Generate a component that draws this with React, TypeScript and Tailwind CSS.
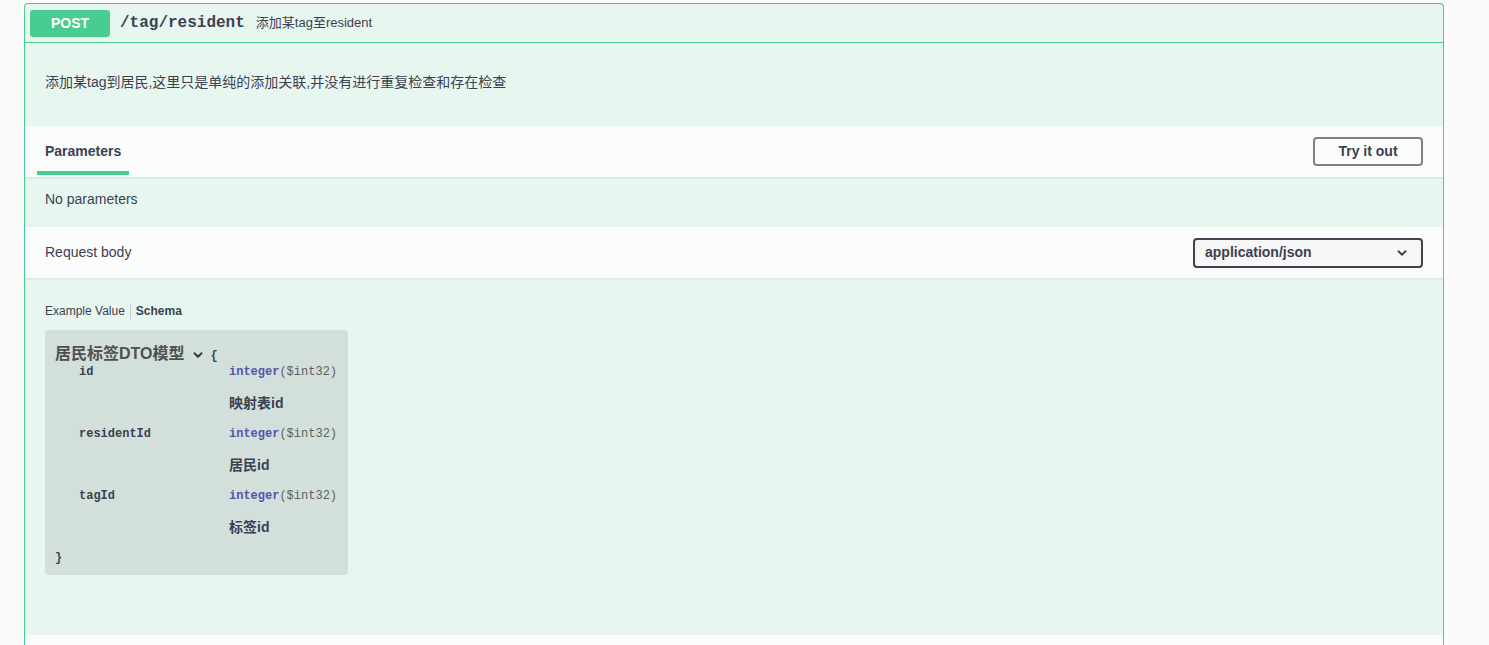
const sans = '[font-family:"Liberation_Sans","Noto_Sans_CJK_SC",sans-serif]'
const mono = '[font-family:"Liberation_Mono","Noto_Sans_CJK_SC",monospace]'

type Prop = { name: string; desc: string }

const props: Prop[] = [
  { name: 'id', desc: '映射表id' },
  { name: 'residentId', desc: '居民id' },
  { name: 'tagId', desc: '标签id' },
]

function Chevron({ className }: { className?: string }) {
  return (
    <svg viewBox="0 0 20 20" className={className} fill="none" stroke="currentColor" strokeWidth={2.6} strokeLinecap="round" strokeLinejoin="round">
      <path d="M5 7.5l5 5 5-5" />
    </svg>
  )
}

export default function App() {
  return (
    <div className={`min-h-[645px] bg-[#fafafa] pl-[24px] pt-[3px] text-[#3b4151] ${sans}`}>
      <div className="h-[642px] w-[1420px] overflow-hidden rounded-t-[4px] border border-b-0 border-[#49cc90] bg-[#e8f6f0]">
        {/* summary */}
        <div className="flex h-[39px] items-center border-b border-[#49cc90] px-[5px]">
          <div className="flex h-[27px] w-[80px] items-center justify-center rounded-[3px] bg-[#49cc90] text-[14px] font-bold text-white">
            POST
          </div>
          <div className={`ml-[10px] text-[16px] font-bold ${mono}`}>/tag/resident</div>
          <div className="ml-[11px] text-[13px]">添加某tag至resident</div>
        </div>

        {/* description */}
        <div className="flex h-[83px] items-center px-[20px] pb-[5px] text-[14px]">
          添加某tag到居民,这里只是单纯的添加关联,并没有进行重复检查和存在检查
        </div>

        {/* parameters tab header */}
        <div className="flex h-[51px] items-center justify-between bg-[#fafdfc] pl-[12px] pr-[20px] shadow-[0_1px_2px_rgba(0,0,0,0.1)]">
          <div className="flex h-full flex-col justify-end">
            <div className="px-[8px] pb-[9px] text-[14px] font-bold">Parameters</div>
            <div className="mb-[2px] h-[4px] w-[92px] bg-[#49cc90]" />
          </div>
          <button className="h-[29px] w-[110px] rounded-[4px] border-2 border-[#808080] text-[14px] font-bold">
            Try it out
          </button>
        </div>

        {/* no parameters */}
        <div className="flex h-[50px] items-center px-[20px] pb-[6px] text-[14px]">No parameters</div>

        {/* request body header */}
        <div className="flex h-[51px] items-center justify-between bg-[#fafdfc] px-[20px] shadow-[0_1px_2px_rgba(0,0,0,0.1)]">
          <div className="text-[14px]">Request body</div>
          <div className="flex h-[30px] w-[230px] items-center justify-between rounded-[4px] border-2 border-[#41444e] bg-[#f7f7f7] pl-[10px] pr-[12px] text-[14px] font-bold">
            <span>application/json</span>
            <Chevron className="h-[14px] w-[14px]" />
          </div>
        </div>

        {/* body */}
        <div className="h-[357px] px-[20px] pt-[24px]">
          <div className="flex items-center text-[12px]">
            <span>Example Value</span>
            <span className="mx-[5px] h-[15px] w-px bg-[#c8ccd0]" />
            <span className="font-bold">Schema</span>
          </div>
          <div className="mt-[10px] h-[245px] w-[303px] rounded-[4px] bg-[#d3dfda] px-[10px] pt-[15px]">
            <div className="flex h-[18px] items-center">
              <span className="text-[16px] font-bold text-[#505050]">居民标签DTO模型</span>
              <Chevron className="ml-[6px] mt-[2px] h-[14px] w-[14px] text-[#333]" />
              <span className={`ml-[6px] mt-[4px] text-[12px] font-bold ${mono}`}>{'{'}</span>
            </div>
            <div className="mt-[-1px]">
              {props.map(p => (
                <div key={p.name} className="flex h-[62px]">
                  <div className={`w-[174px] pl-[24px] text-[12px] font-bold leading-[20px] ${mono}`}>{p.name}</div>
                  <div>
                    <div className={`text-[12px] leading-[20px] ${mono}`}>
                      <span className="font-bold text-[#55a]">integer</span>
                      <span className="text-[#606060]">($int32)</span>
                    </div>
                    <div className="mt-[11px] text-[14px] font-bold leading-[20px]">{p.desc}</div>
                  </div>
                </div>
              ))}
            </div>
            <div className={`text-[12px] font-bold leading-[20px] ${mono}`}>{'}'}</div>
          </div>
        </div>

        <div className="h-[20px] bg-[#fafdfc]" />
      </div>
    </div>
  )
}
